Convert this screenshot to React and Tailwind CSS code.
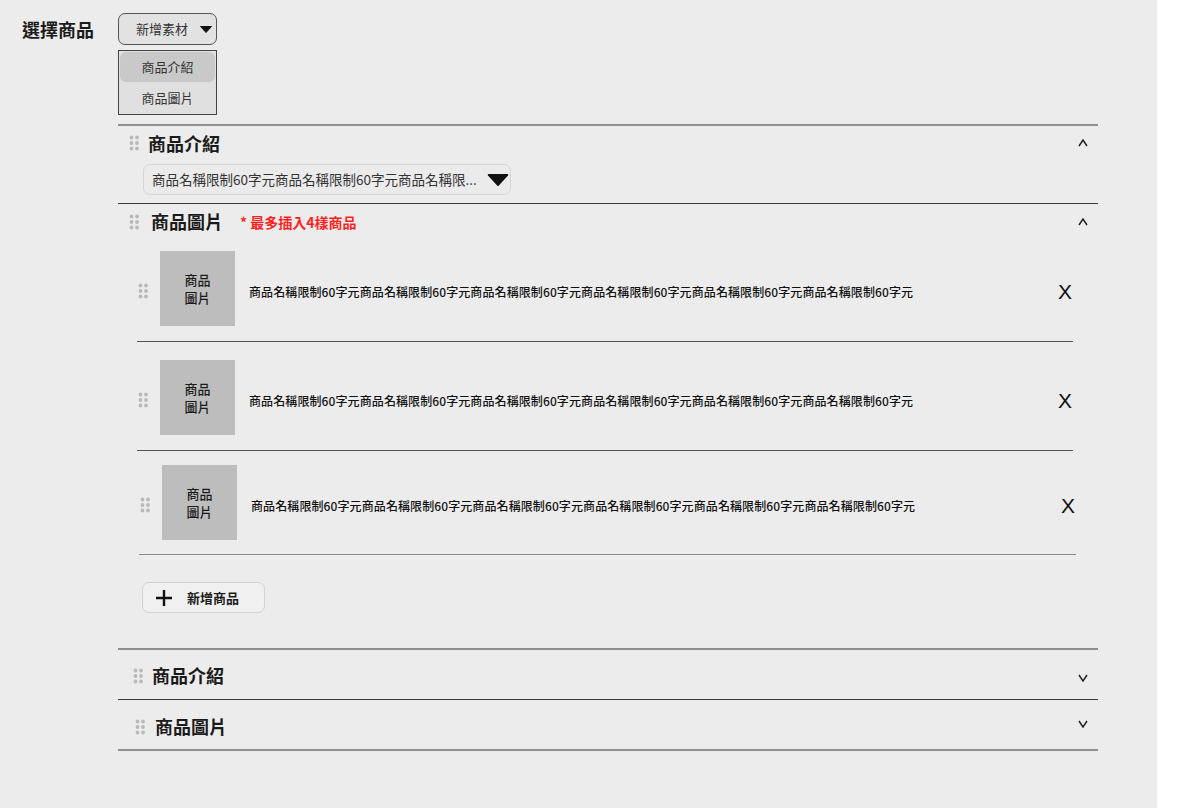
import React from "react";

const FONT = { fontFamily: '"Noto Sans CJK TC", "Noto Sans", sans-serif' };

function Handle({ className = "" }) {
  return (
    <svg width="10" height="16" viewBox="0 0 10 16" className={className}>
      {[2.5, 8].map((x) =>
        [2.5, 8, 13.5].map((y) => (
          <circle key={x + "-" + y} cx={x} cy={y} r="1.9" fill="#b9b9b9" />
        ))
      )}
    </svg>
  );
}

function Caret({ w = 12, h = 7 }) {
  return (
    <svg width={w} height={h} viewBox="0 0 12 7">
      <path d="M0.5 0.5 L11.5 0.5 L6 6.5 Z" fill="#111" stroke="#111" strokeLinejoin="round" />
    </svg>
  );
}

function Chevron({ up = true, className = "" }) {
  return (
    <svg width="10" height="8" viewBox="0 0 10 8" className={className}>
      <path d={up ? "M1 7 L5 1 L9 7" : "M1 1 L5 7 L9 1"} fill="none" stroke="#222" strokeWidth="1.5" />
    </svg>
  );
}

const NAME = "商品名稱限制60字元".repeat(6);

function Item({ className = "", last = false }) {
  return (
    <div className={"flex items-center border-b " + (last ? "border-[#8c8c8c]" : "border-[#555]") + " " + className}>
      <Handle className="ml-[1px] mt-[4px] shrink-0" />
      <div className="ml-[12px] flex h-[75px] w-[75px] shrink-0 flex-col items-center justify-center bg-[#bdbdbd] text-[13px] font-medium leading-[18px] text-[#1a1a1a]">
        <span>商品</span>
        <span>圖片</span>
      </div>
      <div className="ml-[14px] mt-[6px] flex-1 text-[12px] font-medium tracking-[0.1px] text-[#111] whitespace-nowrap">{NAME}</div>
      <div className="mr-[1px] mt-[6px] text-[21px] text-[#111]" style={{ fontFamily: '"Liberation Sans", sans-serif' }}>X</div>
    </div>
  );
}

export default function App() {
  return (
    <div className="flex h-[808px] w-[1177px] bg-white" style={FONT}>
      <div className="flex h-full w-[1157px] bg-[#ececec]">
        <div className="w-[118px] shrink-0 pl-[22px] pt-[16px] text-[18px] font-bold text-[#1a1a1a]">選擇商品</div>
        <div className="flex w-[980px] flex-col pt-[13px]">
          {/* add material select */}
          <div className="flex h-[32px] w-[99px] items-center justify-between rounded-[7px] border border-[#555] bg-[#e2e2e2] pl-[17px] pr-[4px]">
            <span className="text-[13px] text-[#333]">新增素材</span>
            <Caret />
          </div>
          {/* menu */}
          <div className="mt-[5px] flex h-[65px] w-[99px] flex-col border border-[#444] bg-[#e0e0e0] p-[1px]">
            <div className="flex h-[30px] items-center justify-center rounded-[6px] bg-[#c9c9c9] text-[13px] text-[#333]">商品介紹</div>
            <div className="flex h-[31px] items-center justify-center text-[13px] text-[#333]">商品圖片</div>
          </div>

          {/* section 1 */}
          <div className="mt-[9px] border-t-2 border-[#8f8f8f] pb-[8px]">
            <div className="flex h-[34px] items-center pl-[11px] pr-[10px]">
              <Handle />
              <span className="ml-[9px] text-[18px] font-semibold text-[#1a1a1a]">商品介紹</span>
              <Chevron up className="ml-auto" />
            </div>
            <div className="ml-[25px] mt-[4px] flex h-[31px] w-[368px] items-center justify-between rounded-[7px] border border-[#d6d6d6] bg-[#ebebeb] pl-[8px] pr-[1px]">
              <span className="text-[13.5px] text-[#333]">商品名稱限制60字元商品名稱限制60字元商品名稱限...</span>
              <Caret w={22} h={12} />
            </div>
          </div>

          {/* section 2 */}
          <div className="border-t border-[#3a3a3a]">
            <div className="flex h-[38px] items-center pl-[11px] pr-[10px] pb-[3px]">
              <Handle />
              <span className="ml-[12px] text-[18px] font-semibold text-[#1a1a1a]">商品圖片</span>
              <span className="ml-[17px] mt-[1px] text-[14px] font-bold text-[#ff1f1f]">* 最多插入4樣商品</span>
              <Chevron up className="ml-auto" />
            </div>
            <div className="ml-[19px] flex w-[936px] flex-col">
              <Item className="pt-[9px] pb-[15px]" />
              <Item className="pt-[18px] pb-[15px]" />
              <Item className="ml-[2px] w-[937px] pt-[14px] pb-[14px]" last />
            </div>
            <div className="ml-[24px] mt-[27px] mb-[35px] flex h-[31px] w-[123px] items-center rounded-[7px] border border-[#d2d2d2] bg-[#f0f0f0]">
              <svg width="18" height="18" viewBox="0 0 18 18" className="ml-[12px]">
                <path d="M9 1 V17 M1 9 H17" stroke="#111" strokeWidth="2.4" />
              </svg>
              <span className="ml-[14px] text-[13px] font-bold text-[#1a1a1a]">新增商品</span>
            </div>
          </div>

          {/* section 3 */}
          <div className="border-t-2 border-[#8f8f8f]">
            <div className="flex h-[49px] items-center pl-[15px] pr-[10px] pt-[2px]">
              <Handle />
              <span className="ml-[9px] text-[18px] font-semibold text-[#1a1a1a]">商品介紹</span>
              <Chevron up={false} className="ml-auto mt-[4px]" />
            </div>
          </div>
          {/* section 4 */}
          <div className="border-t border-[#3a3a3a] border-b-2 border-b-[#8f8f8f]">
            <div className="flex h-[49px] items-center pl-[17px] pr-[10px] pt-[4px]">
              <Handle />
              <span className="ml-[10px] text-[18px] font-semibold text-[#1a1a1a]">商品圖片</span>
              <Chevron up={false} className="ml-auto -mt-[6px]" />
            </div>
          </div>
        </div>
      </div>
    </div>
  );
}
